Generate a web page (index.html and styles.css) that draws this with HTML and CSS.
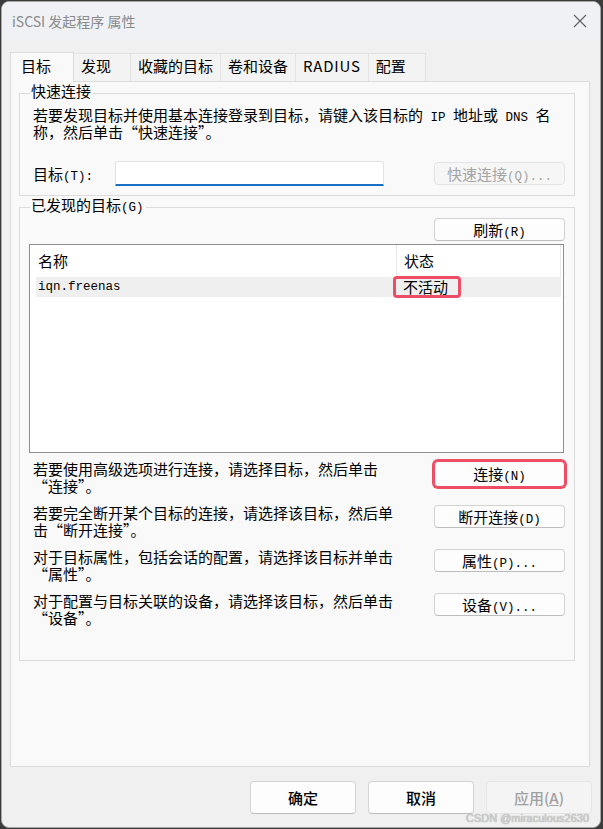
FILE: index.html
```html
<!DOCTYPE html>
<html lang="zh-CN">
<head>
    <meta charset="UTF-8">
    <title>iSCSI 发起程序 属性</title>
    <link rel="stylesheet" href="styles.css">
</head>
<body>
    <div class="window">
        <div class="titlebar">
            <span class="title">iSCSI 发起程序 属性</span>
            <svg class="close" width="14" height="14" viewBox="0 0 14 14">
                <path d="M1 1 L13 13 M13 1 L1 13" stroke="#5f5f5f" stroke-width="1.1" fill="none"/>
            </svg>
        </div>

        <div class="main">
            <div class="tabs">
                <div class="tab active">目标</div>
                <div class="tab">发现</div>
                <div class="tab">收藏的目标</div>
                <div class="tab">卷和设备</div>
                <div class="tab tab-latin">RADIUS</div>
                <div class="tab">配置</div>
            </div>

            <div class="panel">
                <fieldset class="group quick">
                    <legend>快速连接</legend>
                    <p class="desc">若要发现目标并使用基本连接登录到目标，请键入该目标的<span class="mono"> IP </span>地址或<span class="mono"> DNS </span>名<br>称，然后单击“快速连接”。</p>
                    <div class="target-row">
                        <label class="target-label">目标<span class="mono">(T):</span></label>
                        <input class="target-input" type="text">
                        <button class="btn" disabled>快速连接<span class="mono">(Q)...</span></button>
                    </div>
                </fieldset>

                <fieldset class="group found">
                    <legend>已发现的目标<span class="mono">(G)</span></legend>
                    <div class="refresh-row">
                        <button class="btn">刷新<span class="mono">(R)</span></button>
                    </div>
                    <div class="list">
                        <div class="list-head">
                            <div class="col-name">名称</div>
                            <div class="col-status">状态</div>
                        </div>
                        <div class="list-row">
                            <div class="col-name mono">iqn.freenas</div>
                            <div class="col-status"><span class="mark"></span>不活动</div>
                        </div>
                    </div>

                    <div class="action">
                        <p class="action-text">若要使用高级选项进行连接，请选择目标，然后单击<br>“连接”。</p>
                        <button class="btn hl">连接<span class="mono">(N)</span></button>
                    </div>
                    <div class="action">
                        <p class="action-text">若要完全断开某个目标的连接，请选择该目标，然后单<br>击“断开连接”。</p>
                        <button class="btn">断开连接<span class="mono">(D)</span></button>
                    </div>
                    <div class="action">
                        <p class="action-text">对于目标属性，包括会话的配置，请选择该目标并单击<br>“属性”。</p>
                        <button class="btn">属性<span class="mono">(P)...</span></button>
                    </div>
                    <div class="action">
                        <p class="action-text">对于配置与目标关联的设备，请选择该目标，然后单击<br>“设备”。</p>
                        <button class="btn">设备<span class="mono">(V)...</span></button>
                    </div>
                </fieldset>
            </div>

            <div class="footer">
                <button class="dlg-btn">确定</button>
                <button class="dlg-btn">取消</button>
                <button class="dlg-btn" disabled>应用(<u>A</u>)</button>
            </div>
        </div>

        <div class="watermark">CSDN @miraculous2630</div>
    </div>
</body>
</html>
```

FILE: styles.css
```css
body {
    margin: 0;
    background: #3b3b3b;
    font-family: "Noto Sans CJK SC", "Noto Sans", sans-serif;
    color: #000;
}

.window {
    position: relative;
    width: 598px;
    height: 825px;
    margin: 1px 0 0 1px;
    border: 1px solid #a8a8a8;
    border-radius: 8px;
    background: #f0f0f0;
    overflow: hidden;
}

.titlebar {
    height: 38px;
    display: flex;
    align-items: center;
    justify-content: space-between;
    padding: 0 9px 0 10px;
    background: #eff1f5;
}

.title {
    font-size: 14px;
    color: #8a8a8a;
}

.close {
    margin-right: 4px;
}

.main {
    padding: 12px 10px 0 8px;
}

/* tabs */
.tabs {
    display: flex;
    align-items: flex-end;
    height: 29px;
}

.tab {
    box-sizing: border-box;
    min-width: 58px;
    height: 28px;
    padding: 0 7px;
    font-size: 15px;
    line-height: 23px;
    background: #f3f3f3;
    border: 1px solid #e2e2e2;
    border-bottom: none;
    margin-left: -1px;
}

.tab-latin {
    letter-spacing: 0.8px;
}

.tab.active {
    min-width: 64px;
    height: 30px;
    line-height: 25px;
    padding: 0 10px;
    margin: 0 0 -1px 0;
    background: #f9f9f9;
    border-color: #dcdcdc;
    position: relative;
    z-index: 1;
}

.panel {
    height: 683px;
    background: #f9f9f9;
    border: 1px solid #dcdcdc;
    padding: 1px 14px 0 8px;
}

/* group boxes */
.group {
    margin: 0;
    padding: 0 9px 0 13px;
    border: 1px solid #dcdcdc;
}

.group legend {
    height: 15px;
    padding: 0 2px 6px 1px;
    margin-left: -3px;
    font-size: 15px;
    line-height: 15px;
}

.mono {
    font-family: "Liberation Mono", monospace;
    font-size: 12.5px;
    line-height: 0;
    white-space: pre;
}

.desc {
    margin: 2px 0 0;
    font-size: 15px;
    line-height: 17px;
    white-space: nowrap;
}

.target-row {
    display: flex;
    align-items: center;
    margin-top: 21px;
    padding-bottom: 9px;
}

.target-label {
    width: 82px;
    font-size: 15px;
    line-height: 20px;
}

.target-input {
    width: 269px;
    height: 25px;
    box-sizing: border-box;
    border: 1px solid #e3e3e3;
    border-bottom: 2px solid #1a6ec4;
    border-radius: 3px 3px 0 0;
    background: #fff;
    margin: 0 auto 0 0;
}

.btn {
    width: 131px;
    height: 23px;
    padding: 0;
    font-family: "Noto Sans CJK SC", sans-serif;
    font-size: 15px;
    line-height: 20px;
    color: #000;
    background: #fdfdfd;
    border: 1px solid #d2d2d2;
    border-bottom-color: #bdbdbd;
    border-radius: 4px;
}

.btn:disabled {
    color: #a3a3a3;
    background: #f6f6f6;
    border-color: #e4e4e4;
}

.btn.hl {
    height: 26px;
    border-color: #ee4d66;
    box-shadow: 0 0 0 2px #ee4d66;
}

.found {
    margin-top: 1px;
    height: 462px;
}

.refresh-row {
    display: flex;
    justify-content: flex-end;
}

.list {
    margin: 3px 1px 0 -4px;
    height: 207px;
    background: #fff;
    border: 1px solid #8e8e8e;
    font-size: 15px;
}

.list-head {
    display: flex;
    height: 32px;
    line-height: 32px;
    margin-right: 2px;
    border-right: 1px solid #e8e8e8;
}

.list-head .col-name {
    width: 358px;
    padding-left: 8px;
    border-right: 1px solid #e8e8e8;
}

.list-head .col-status {
    padding-left: 7px;
}

.list-row {
    display: flex;
    height: 20px;
    line-height: 20px;
    margin: 0 2px 0 6px;
    background: #efefef;
}

.list-row .col-name {
    width: 357px;
    padding-left: 2px;
    font-size: 12.5px;
    line-height: 20px;
}

.list-row .col-status {
    position: relative;
    padding-left: 8px;
}

.mark {
    position: absolute;
    left: -2px;
    top: -1px;
    width: 62px;
    height: 16px;
    border: 3px solid #ee4d66;
    border-radius: 4px;
}

/* actions */
.action {
    display: flex;
    justify-content: space-between;
    align-items: flex-start;
    height: 44px;
}

.list + .action {
    margin-top: 8px;
}

.action-text {
    margin: -1px 0 0;
    font-size: 15px;
    line-height: 17px;
}

/* footer */
.footer {
    display: flex;
    justify-content: flex-end;
    gap: 12px;
    margin: 14px -2px 0 0;
}

.dlg-btn {
    width: 106px;
    height: 33px;
    font-family: "Noto Sans CJK SC", sans-serif;
    font-size: 15px;
    font-weight: 500;
    color: #000;
    background: #fdfdfd;
    border: 1px solid #d4d4d4;
    border-bottom-color: #bcbcbc;
    border-radius: 4px;
}

.dlg-btn:disabled {
    color: #a0a0a0;
    background: #f4f4f4;
    border-color: #e6e6e6;
}

.watermark {
    position: absolute;
    right: 11px;
    bottom: 3px;
    font-family: "Liberation Sans", sans-serif;
    font-size: 11px;
    color: #d2d2d2;
    text-shadow: 0 0 1px #8a8a8a;
}
```
